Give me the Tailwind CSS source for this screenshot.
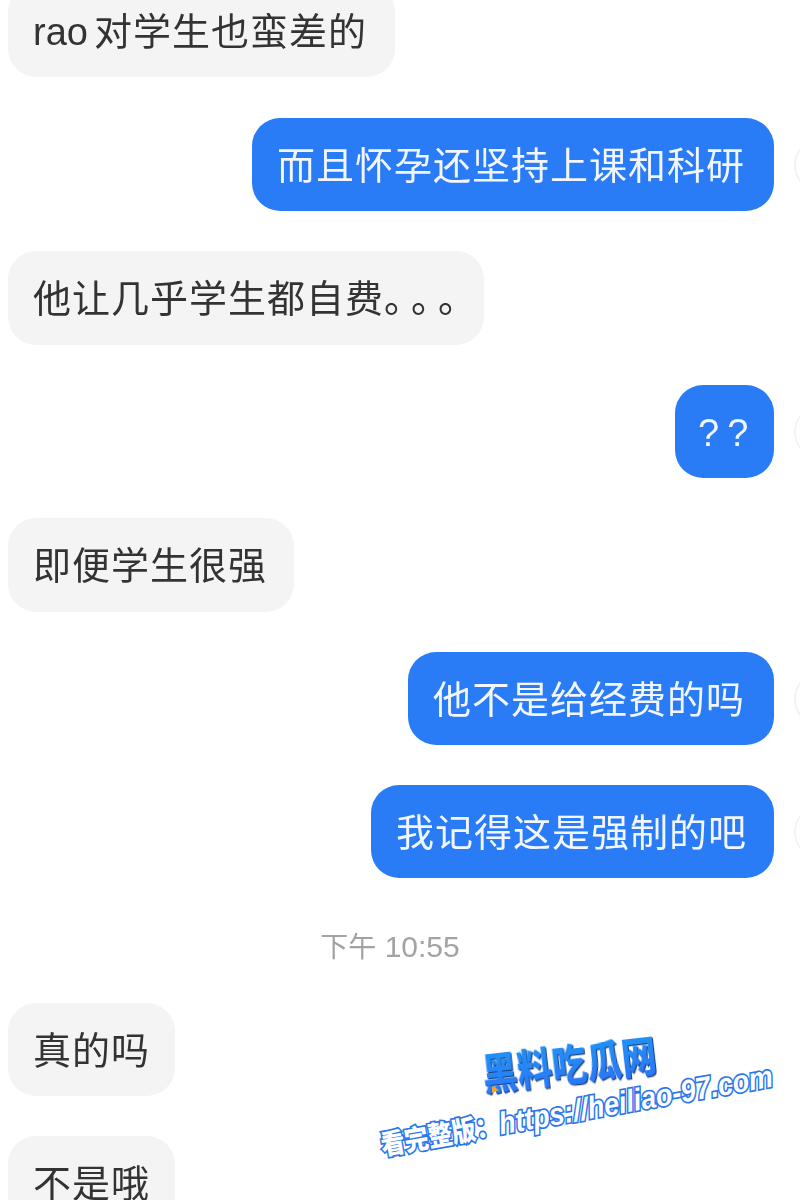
<!DOCTYPE html>
<html lang="zh">
<head>
<meta charset="utf-8">
<script src="https://cdn.jsdelivr.net/npm/@tailwindcss/browser@4"></script>
</head>
<body class="bg-white">
<div class="relative w-[800px] h-[1200px] overflow-hidden bg-white font-['Liberation_Sans','Noto_Sans_CJK_SC',sans-serif] text-[38px] leading-[96px] tracking-[1px] text-[#333333] [text-spacing-trim:space-all]">
  <div class="flex flex-col -mt-[16px] blur-[0.5px]">
    <div class="flex justify-start pl-2 mb-[41px]">
      <div class="h-[93px] w-[387px] rounded-[28px] bg-[#f4f4f5] pl-[25px] whitespace-nowrap"><span class="tracking-normal mr-[6px]">rao</span>对学生也蛮差的</div>
    </div>
    <div class="flex justify-end items-center mb-[40px]">
      <div class="h-[93px] w-[522px] rounded-[28px] bg-[#2a7bf6] pl-[25px] text-[#f2f7ff] whitespace-nowrap">而且怀孕还坚持上课和科研</div>
      <div class="w-[54px] h-[54px] ml-[20px] -mr-[48px] rounded-full border-2 border-[#f3f3f3] shrink-0"></div>
    </div>
    <div class="flex justify-start pl-2 mb-[40px]">
      <div class="h-[94px] w-[476px] rounded-[28px] bg-[#f4f4f5] pl-[25px] whitespace-nowrap">他让几乎学生都自费<span class="tracking-[-11px]">。。。</span></div>
    </div>
    <div class="flex justify-end items-center mb-[40px]">
      <div class="h-[93px] w-[99px] rounded-[28px] bg-[#2a7bf6] pl-[23px] text-[#f2f7ff] tracking-[8px] whitespace-nowrap">??</div>
      <div class="w-[54px] h-[54px] ml-[20px] -mr-[48px] rounded-full border-2 border-[#f3f3f3] shrink-0"></div>
    </div>
    <div class="flex justify-start pl-2 mb-[40px]">
      <div class="h-[94px] w-[286px] rounded-[28px] bg-[#f4f4f5] pl-[25px] whitespace-nowrap">即便学生很强</div>
    </div>
    <div class="flex justify-end items-center mb-[40px]">
      <div class="h-[93px] w-[366px] rounded-[28px] bg-[#2a7bf6] pl-[25px] text-[#f2f7ff] whitespace-nowrap">他不是给经费的吗</div>
      <div class="w-[54px] h-[54px] ml-[20px] -mr-[48px] rounded-full border-2 border-[#f3f3f3] shrink-0"></div>
    </div>
    <div class="flex justify-end items-center">
      <div class="h-[93px] w-[403px] rounded-[28px] bg-[#2a7bf6] pl-[25px] text-[#f2f7ff] whitespace-nowrap">我记得这是强制的吧</div>
      <div class="w-[54px] h-[54px] ml-[20px] -mr-[48px] rounded-full border-2 border-[#f3f3f3] shrink-0"></div>
    </div>
    <div class="h-[125px] flex items-center justify-center pt-[13px]">
      <span class="text-center text-[30px] leading-none tracking-normal text-[#a3a3a3] whitespace-nowrap mr-[20px]"><span class="text-[28px]">下午</span> 10:55</span>
    </div>
    <div class="flex justify-start pl-2 mb-[40px]">
      <div class="h-[93px] w-[167px] rounded-[28px] bg-[#f4f4f5] pl-[25px] whitespace-nowrap">真的吗</div>
    </div>
    <div class="flex justify-start pl-2">
      <div class="h-[93px] w-[167px] rounded-[28px] bg-[#f4f4f5] pl-[25px] whitespace-nowrap">不是哦</div>
    </div>
  </div>

  <div class="absolute left-[479px] top-[1034px] w-[180px] -rotate-[6.5deg] scale-y-[1.25] origin-center text-center font-['Noto_Sans_CJK_SC',sans-serif] font-black text-[35px] leading-[56px] tracking-[0px] whitespace-nowrap bg-gradient-to-b from-[#1f9bf6] to-[#2c6ff5] bg-clip-text text-transparent [filter:drop-shadow(1px_1px_0_#1b3f7c)]">黑料吃瓜网</div>
  <svg class="absolute left-[491px] top-[1085px]" width="9" height="9" viewBox="0 0 9 9"><path d="M1 1 L8 5 L1 8 Z" fill="#f5a623"/></svg>
  <div class="absolute left-[378px] top-[1094px] w-[394px] -rotate-[10deg] scale-y-[1.15] origin-center font-['Liberation_Sans','Noto_Sans_CJK_SC',sans-serif] font-bold italic text-[27px] leading-[34px] tracking-[0px] text-white whitespace-nowrap [-webkit-text-stroke:3px_#2a76ee] [paint-order:stroke_fill]"><span class="text-[24px] not-italic font-black">看完整版：</span>https://heiliao-97.com</div>
</div>
</body>
</html>
